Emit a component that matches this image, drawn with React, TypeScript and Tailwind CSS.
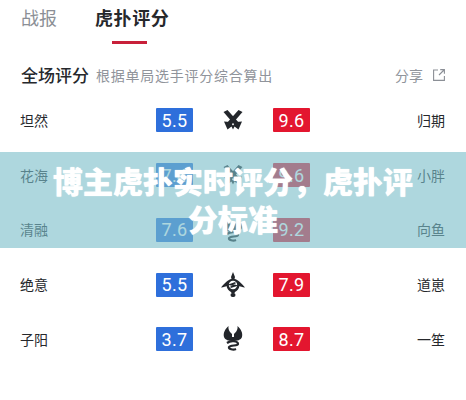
import React from "react";

const CJK = "font-['Noto_Sans_CJK_SC','Noto_Sans',sans-serif]";

const Swords = () => (
  <svg width="22" height="22" viewBox="0 0 22 22" fill="none">
    <path d="M1.5 3 L5.5 1 L18 15 L14.5 18 Z" fill="#23262b" />
    <path d="M20.5 3 L16.5 1 L4 15 L7.5 18 Z" fill="#23262b" />
    <path d="M2 12.5 L8 13 L11 16.5 L14 13 L20 12.5 L16.5 20.5 L12.5 17.5 L11 20.5 L9.5 17.5 L5.5 20.5 Z" fill="#23262b" />
  </svg>
);

const Bird = () => (
  <svg width="24" height="26" viewBox="0 0 24 26" fill="none">
    <path d="M12 0 L14 5 L13.5 7 C17 7.5 20 11 24 15.5 C21 15 19.5 14.5 18.5 14 C18 17 16 19 14 20 L13.5 21 L10.5 21 L10 20 C8 19 6 17 5.5 14 C4.5 14.5 3 15 0 15.5 C4 11 7 7.5 10.5 7 L10 5 Z" fill="#23262b" />
    <circle cx="12" cy="13" r="4.2" fill="#fff" />
    <path d="M14.5 10.8 L9.5 12.6 L14.5 13.6 L9.5 15.2" stroke="#23262b" strokeWidth="1.6" />
    <rect x="9.5" y="21" width="5" height="4" rx="2" fill="#23262b" />
  </svg>
);

const Fork = () => (
  <svg width="20" height="26" viewBox="0 0 20 26" fill="none">
    <path d="M5.5 0 C5 4 7 6 9 8 L9 11 L11 11 L11 8 C13 6 15 4 14.5 0 C18 3 20 7 19 11 C18 14 14 15 10 15 C6 15 2 14 1 11 C0 7 2 3 5.5 0 Z" fill="#23262b" />
    <path d="M4 17 C8 14 15 15 15 18 C15 20 7 19 6 21 C5.5 23 10 24.5 13 23" stroke="#23262b" strokeWidth="2.2" fill="none" />
  </svg>
);

const rows = [
  { left: "坦然", a: "5.5", b: "9.6", right: "归期", icon: <Swords /> },
  { left: "花海", a: "7.4", b: "9.6", right: "小胖", icon: <Swords /> },
  { left: "清融", a: "7.6", b: "9.2", right: "向鱼", icon: <Fork /> },
  { left: "绝意", a: "5.5", b: "7.9", right: "道崽", icon: <Bird /> },
  { left: "子阳", a: "3.7", b: "8.7", right: "一笙", icon: <Fork /> },
];

export default function App() {
  return (
    <div className={`relative w-[466px] h-[400px] overflow-hidden bg-white ${CJK}`}>
      <div className="flex h-[46px] pl-[21px]">
        <div className="pt-[3px] text-[18px] leading-[28px] text-[#8b8f96]">战报</div>
        <div className="ml-[38px] flex flex-col items-center pt-[3px]">
          <div className="text-[18px] leading-[28px] font-bold tracking-[0.6px] text-[#26282c]">虎扑评分</div>
          <div className="mt-[10px] mr-[5px] h-[3px] w-[35px] bg-[#c8203a]" />
        </div>
      </div>

      <div className="flex items-center h-[47px] pt-[11px] pl-[21px] pr-[21px]">
        <span className="text-[17px] font-medium text-[#26282c]">全场评分</span>
        <span className="ml-[7px] text-[14px] tracking-[0.75px] text-[#90949b]">根据单局选手评分综合算出</span>
        <span className="ml-auto text-[14px] text-[#90949b]">分享</span>
        <svg className="ml-[10px]" width="12" height="12" viewBox="0 0 12 12" fill="none" stroke="#8b8f96" strokeWidth="1.1">
          <path d="M5 1 H0.6 V11.4 H11.4 V7" />
          <path d="M6 6 L11 1 M7.2 0.6 H11.4 V4.8" />
        </svg>
      </div>

      <div className="flex flex-col">
        {rows.map((r) => (
          <div key={r.left} className="flex items-center h-[54.75px] pl-[20px] pr-[21px]">
            <span className="w-[136px] text-[14px] text-[#26282c]">{r.left}</span>
            <span className="w-[37px] h-[24px] rounded-[1px] bg-[#2e6fdb] flex items-center justify-center font-['Roboto',sans-serif] text-[18px] tracking-[0.3px] text-white">{r.a}</span>
            <span className="w-[80px] flex justify-center">{r.icon}</span>
            <span className="w-[37px] h-[24px] rounded-[1px] bg-[#e3162f] flex items-center justify-center font-['Roboto',sans-serif] text-[18px] tracking-[0.3px] text-white">{r.b}</span>
            <span className="flex-1 text-right text-[14px] text-[#26282c]">{r.right}</span>
          </div>
        ))}
      </div>

      <div className="absolute left-0 top-[152px] h-[96px] w-full flex items-center justify-center bg-[#7bbec9]/[0.61] px-[50px] pb-[2px]">
        <p className="text-center text-[30px] leading-[38px] font-black text-white [text-shadow:0_0_1px_#ffffff]">博主虎扑实时评分，虎扑评分标准</p>
      </div>
    </div>
  );
}
